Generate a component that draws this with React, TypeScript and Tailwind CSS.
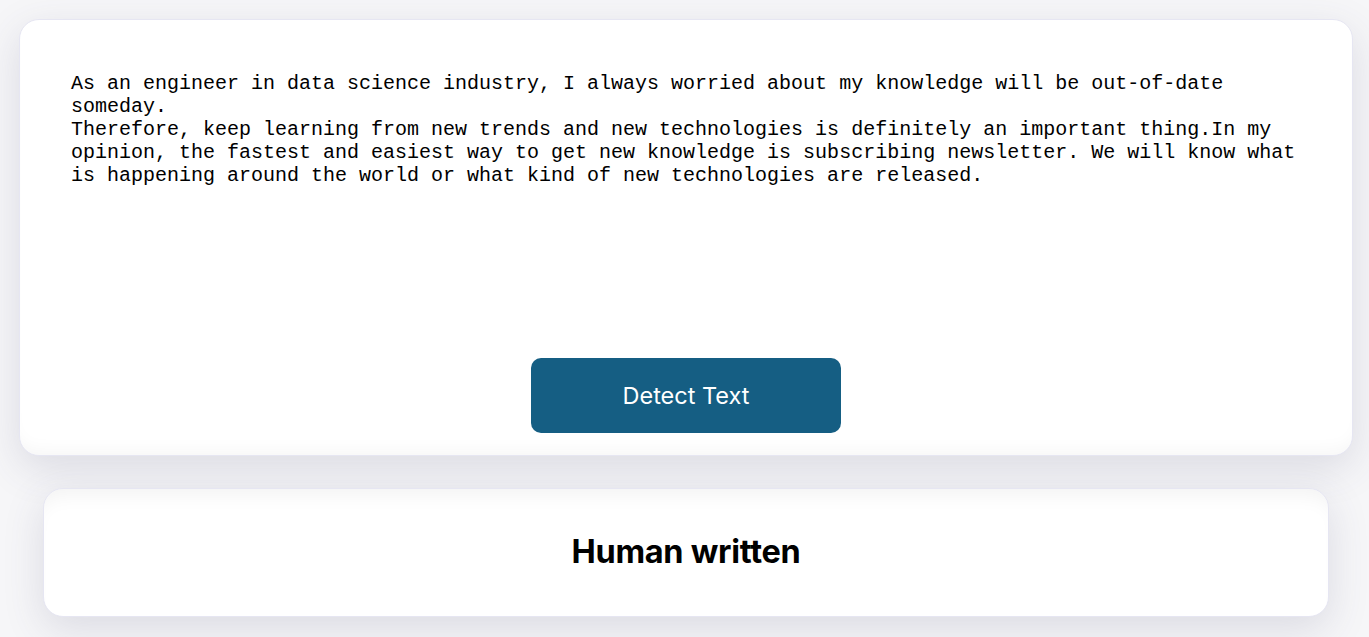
export default function App() {
  const essay =
    "As an engineer in data science industry, I always worried about my knowledge will be out-of-date someday.\nTherefore, keep learning from new trends and new technologies is definitely an important thing.In my opinion, the fastest and easiest way to get new knowledge is subscribing newsletter. We will know what is happening around the world or what kind of new technologies are released.";

  return (
    <div className="min-h-[637px] bg-[#f6f6f8] pt-[19px] pl-[19px] pr-[16px] pb-[20px]">
      {/* Input card */}
      <div className="flex flex-col items-center rounded-[20px] border border-[#e6e6f2] bg-white pt-[52px] pb-[22px] px-[51px] shadow-[0_12px_40px_rgba(70,70,110,0.15),inset_0_-14px_18px_-10px_rgba(0,0,0,0.04)]">
        <div className="h-[286px] w-full whitespace-pre-wrap text-[20px] leading-[23px] text-black font-['Liberation_Mono','Courier_New',monospace]">
          {essay}
        </div>
        <button className="h-[75px] w-[310px] rounded-[10px] bg-[#155e83] text-[23.5px] text-white font-['Inter',sans-serif]">
          Detect Text
        </button>
      </div>

      {/* Result card */}
      <div className="mx-[24px] mt-[32px] flex h-[129px] items-center justify-center rounded-[20px] border border-[#e6e6f2] bg-white shadow-[0_12px_40px_rgba(70,70,110,0.15),inset_0_18px_20px_-12px_rgba(0,0,0,0.05)]">
        <h2 className="text-[32.5px] font-bold text-black font-['Inter',sans-serif] tracking-[-0.3px]">
          Human written
        </h2>
      </div>
    </div>
  );
}
